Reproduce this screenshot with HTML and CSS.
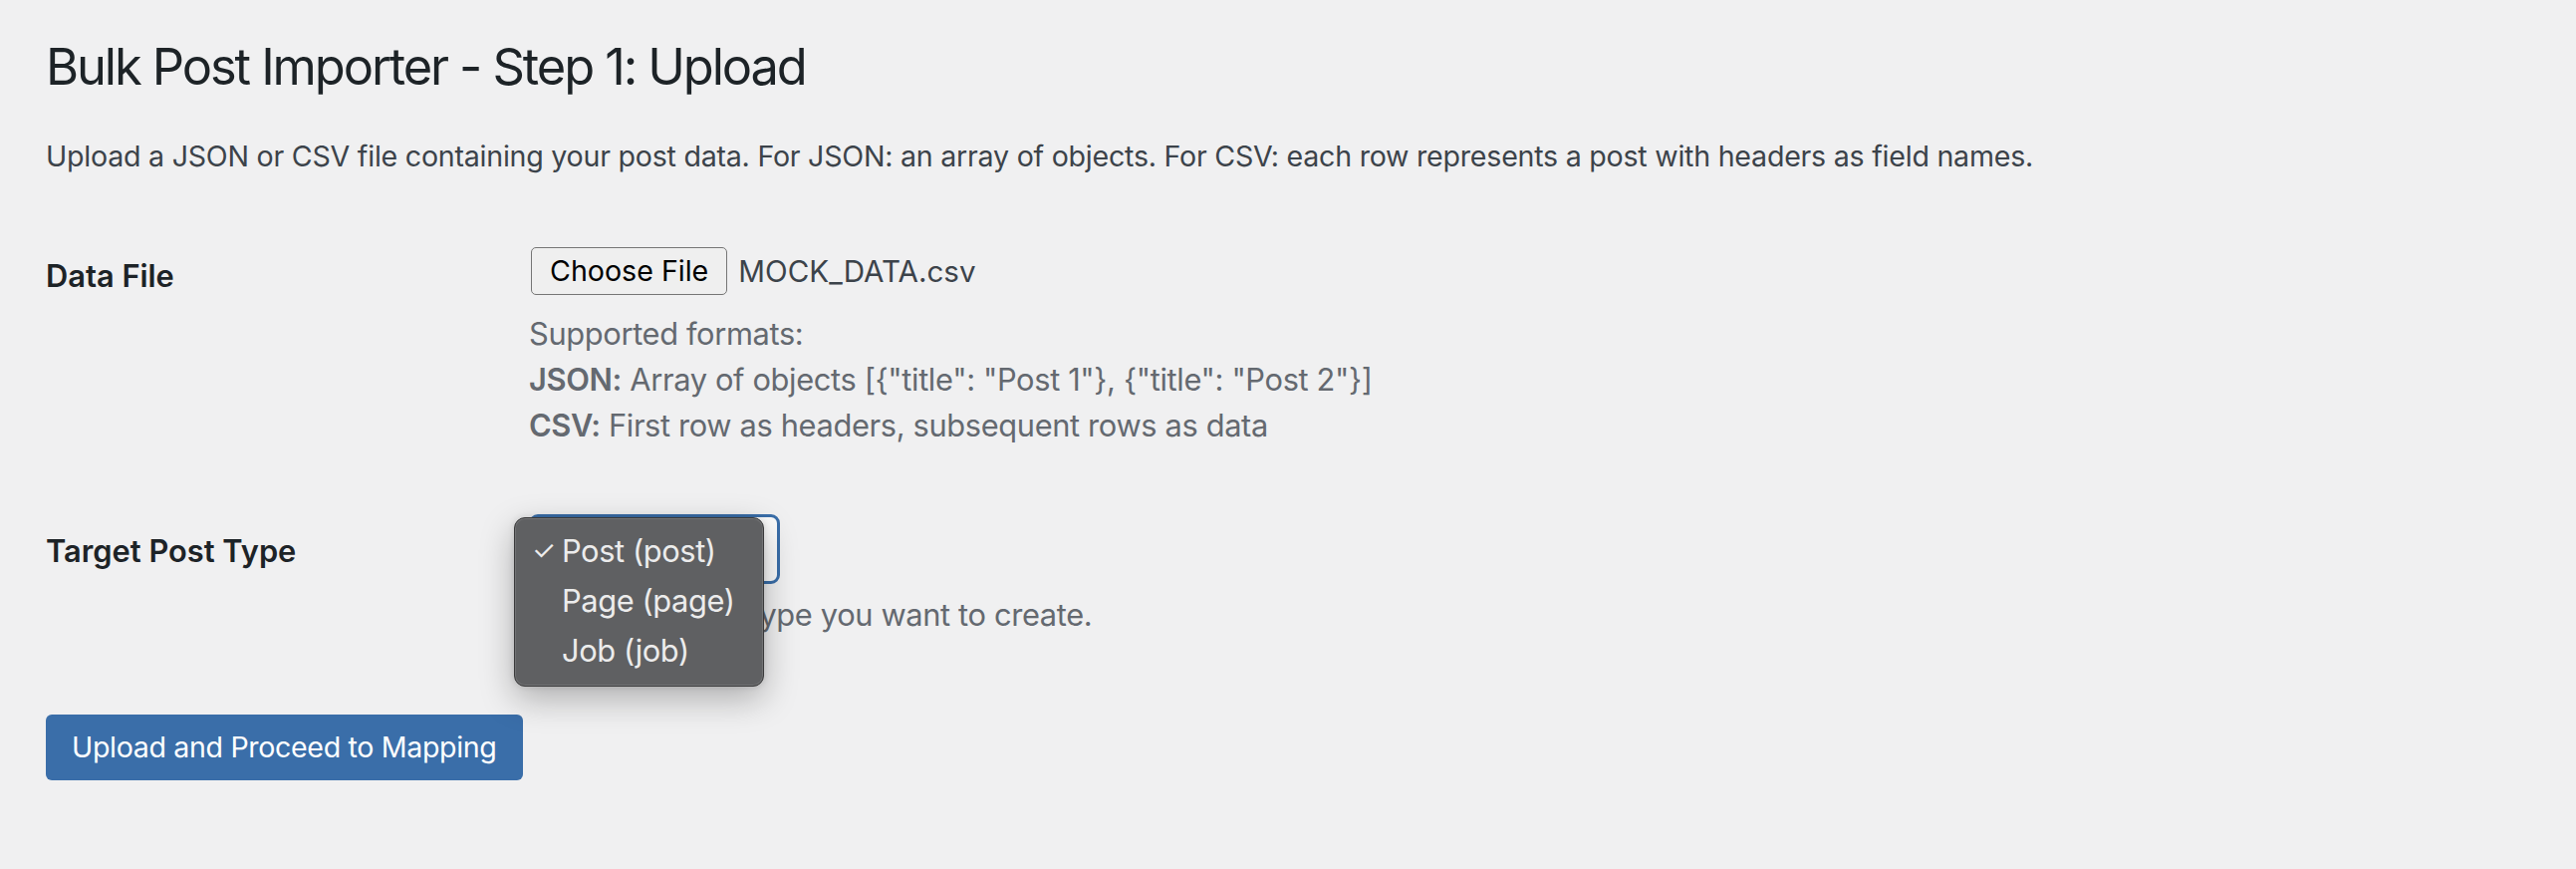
FILE: index.html
```html
<!DOCTYPE html>
<html lang="en">
<head>
<meta charset="utf-8">
<title>Bulk Post Importer - Step 1: Upload</title>
<link rel="stylesheet" href="styles.css">
</head>
<body>
<div class="wrap">
  <h1 class="title">Bulk Post Importer - Step 1: Upload</h1>
  <p class="intro">Upload a JSON or CSV file containing your post data. For JSON: an array of objects. For CSV: each row represents a post with headers as field names.</p>
  <form class="form">
    <div class="row row-file">
      <div class="th">Data File</div>
      <div class="td">
        <div class="file">
          <span class="file-btn">Choose File</span>
          <span class="file-name">MOCK_DATA.csv</span>
        </div>
        <p class="desc desc-file">Supported formats:<br><strong>JSON:</strong> Array of objects [{"title": "Post 1"}, {"title": "Post 2"}]<br><strong>CSV:</strong> First row as headers, subsequent rows as data</p>
      </div>
    </div>
    <div class="row row-type">
      <div class="th">Target Post Type</div>
      <div class="td">
        <div class="select-wrap">
          <div class="select"></div>
          <ul class="menu">
            <li class="menu-item is-selected"><span class="check">✓</span>Post (post)</li>
            <li class="menu-item">Page (page)</li>
            <li class="menu-item">Job (job)</li>
          </ul>
        </div>
        <p class="desc desc-type">Select the post type you want to create.</p>
      </div>
    </div>
    <div class="submit">
      <button type="button" class="btn-primary">Upload and Proceed to Mapping</button>
    </div>
  </form>
</div>
</body>
</html>
```

FILE: styles.css
```css
* { box-sizing: border-box; }

html, body {
  margin: 0;
  padding: 0;
  background: #f0f0f1;
}

body {
  font-family: Inter, "Liberation Sans", sans-serif;
  color: #3c434a;
  width: 2586px;
  height: 872px;
  overflow: hidden;
}

.wrap {
  padding-left: 46px;
}

.title {
  margin: 0;
  padding-top: 34px;
  font-size: 50.6px;
  line-height: 65.8px;
  font-weight: 400;
  letter-spacing: -2.1px;
  color: #1d2327;
}

.intro {
  margin: 36px 0 0;
  font-size: 28.6px;
  line-height: 42.9px;
  letter-spacing: -0.24px;
  color: #3c434a;
}

.form {
  margin-top: 36px;
}

.row {
  display: flex;
}

.th {
  width: 485px;
  flex: none;
  font-size: 30.8px;
  line-height: 40px;
  font-weight: 600;
  color: #1d2327;
}

.row-file .th { padding-top: 42px; }
.row-type .th { padding-top: 50px; }

.td {
  padding: 33px 0 33px 0;
}

.file {
  display: flex;
  height: 55px;
  align-items: flex-start;
}

.file-btn {
  display: inline-flex;
  align-items: center;
  justify-content: center;
  height: 48px;
  padding: 0 18px;
  margin-left: 2px;
  background: #efefef;
  border: 1.5px solid #767676;
  border-radius: 5px;
  font-size: 28.6px;
  color: #000;
}

.file-name {
  margin-left: 11px;
  line-height: 48px;
  font-size: 29.6px;
  color: #3c434a;
}

.desc {
  margin: 0;
  font-size: 30.8px;
  line-height: 46.2px;
  letter-spacing: -0.35px;
  color: #646970;
}

.desc strong { font-weight: 600; }

.desc-file { margin-top: 9px; }
.desc-type { margin-top: 8px; }

.select-wrap {
  position: relative;
  width: 252px;
  height: 70px;
}

.select {
  width: 252px;
  height: 70px;
  border: 3.5px solid #3a6ea9;
  border-radius: 9px;
  background: #fbfbfb;
}

.menu {
  position: absolute;
  left: -15px;
  top: 3px;
  width: 251px;
  height: 170px;
  margin: 0;
  padding: 8px 0 0;
  list-style: none;
  background: #5f6062;
  border: 1.5px solid #3a3a3b;
  border-radius: 11px;
  box-shadow: inset 0 0 0 1px rgba(255, 255, 255, 0.12), 0 12px 34px rgba(0, 0, 0, 0.28), 0 0 6px rgba(0, 0, 0, 0.12);
}

.menu-item {
  position: relative;
  padding-left: 47px;
  font-size: 30.8px;
  line-height: 50px;
  letter-spacing: -0.4px;
  color: #ececec;
}

.check {
  position: absolute;
  left: 17px;
  top: 0;
  font-size: 27px;
  font-weight: 400;
}

.submit {
  margin-top: 43px;
}

.btn-primary {
  height: 66px;
  padding: 0 26px;
  border: 0;
  border-radius: 6px;
  background: #3a6ea9;
  color: #fff;
  font-family: Inter, "Liberation Sans", sans-serif;
  font-size: 28.6px;
  line-height: 66px;
  letter-spacing: -0.35px;
  cursor: pointer;
}
```
